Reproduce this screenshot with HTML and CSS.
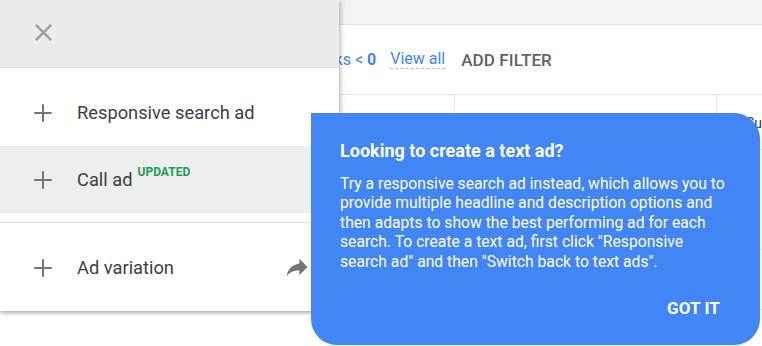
FILE: index.html
```html
<!DOCTYPE html>
<html>
<head>
<meta charset="utf-8">
<link rel="stylesheet" href="styles.css">
</head>
<body>
<div class="page">
  <div class="topbar"></div>
  <div class="filters">
    <span class="filter-chip">Clicks &lt; <b>0</b></span>
    <span class="view-all">View all</span>
    <span class="add-filter">ADD FILTER</span>
  </div>
  <div class="table-head">
    <div class="col col-1"></div>
    <div class="col col-2"></div>
    <div class="col col-3">Su</div>
  </div>
  <div class="table-row"></div>
  <div class="table-row tall"></div>
</div>

<div class="menu">
  <div class="menu-header">
    <svg class="close-icon" viewBox="0 0 24 24" width="29" height="29"><path d="M19 6.41L17.59 5 12 10.59 6.41 5 5 6.41 10.59 12 5 17.59 6.41 19 12 13.41 17.59 19 19 17.59 13.41 12z" fill="#9e9e9e"/></svg>
  </div>
  <div class="menu-list">
    <div class="menu-item">
      <svg class="plus" viewBox="0 0 24 24" width="30" height="30"><path d="M19 12.8h-6.2V19h-1.6v-6.2H5v-1.6h6.2V5h1.6v6.2H19z" fill="#757575"/></svg>
      <span class="label">Responsive search ad</span>
    </div>
    <div class="menu-item hover">
      <svg class="plus" viewBox="0 0 24 24" width="30" height="30"><path d="M19 12.8h-6.2V19h-1.6v-6.2H5v-1.6h6.2V5h1.6v6.2H19z" fill="#757575"/></svg>
      <span class="label">Call ad</span><sup class="badge">UPDATED</sup>
    </div>
    <div class="divider"></div>
    <div class="menu-item">
      <svg class="plus" viewBox="0 0 24 24" width="30" height="30"><path d="M19 12.8h-6.2V19h-1.6v-6.2H5v-1.6h6.2V5h1.6v6.2H19z" fill="#757575"/></svg>
      <span class="label">Ad variation</span>
      <svg class="forward" viewBox="0 0 24 24" width="28" height="28"><path d="M14 9V5l7 7-7 7v-4.1c-5 0-8.5 1.6-11 5.1 1-5 4-10 11-11z" fill="#757575"/></svg>
    </div>
  </div>
</div>

<div class="tip">
  <div class="tip-title">Looking to create a text ad?</div>
  <div class="tip-body">Try a responsive search ad instead, which allows you to provide multiple headline and description options and then adapts to show the best performing ad for each search. To create a text ad, first click "Responsive search ad" and then "Switch back to text ads".</div>
  <div class="tip-actions"><span class="got-it">GOT IT</span></div>
</div>
</body>
</html>
```

FILE: styles.css
```css
* { box-sizing: border-box; }
html, body { margin: 0; padding: 0; }
body {
  width: 762px;
  height: 346px;
  overflow: hidden;
  position: relative;
  background: #fff;
  font-family: Roboto, "Liberation Sans", sans-serif;
}
.page { width: 762px; }
.topbar {
  height: 25px;
  background: #f1f3f4;
  border-bottom: 1px solid #e0e0e0;
}
.filters {
  height: 69px;
  display: flex;
  align-items: center;
  padding-left: 308px;
  font-size: 16px;
  gap: 14px;
}
.filter-chip { color: #4285f4; }
.filter-chip b { font-weight: 700; }
.view-all {
  color: #4285f4;
  border-bottom: 1px dashed #bdbdbd;
  line-height: 18px;
}
.add-filter {
  color: #5f6368;
  font-weight: 500;
  font-size: 17px;
  letter-spacing: 0.1px;
  margin-left: 2px;
}
.table-head {
  display: flex;
  height: 56px;
  border-top: 1px solid #e3e3e3;
  border-bottom: 1px solid #e3e3e3;
}
.col { height: 100%; }
.col-1 { width: 454px; }
.col-2 { width: 262px; border-left: 1px solid #e3e3e3; }
.col-3 {
  flex: 1;
  border-left: 1px solid #e3e3e3;
  padding: 20px 0 0 29px;
  font-size: 14px;
  color: #3c4043;
}
.table-row { height: 100px; border-bottom: 1px solid #e3e3e3; }
.table-row.tall { height: 60px; }

.menu {
  position: absolute;
  left: 0;
  top: 0;
  width: 339px;
  background: #fff;
  box-shadow: 0 2px 4px rgba(0,0,0,0.25), 2px 0 6px rgba(0,0,0,0.15);
}
.menu-header {
  height: 68px;
  background: #ececec;
  border-bottom: 1px solid #dcdcdc;
  display: flex;
  align-items: center;
  padding-left: 29px;
  padding-bottom: 3px;
}
.menu-list { padding: 11px 0 10px; }
.menu-item {
  height: 67px;
  display: flex;
  align-items: center;
  padding-left: 28px;
  position: relative;
  color: #3c4043;
  font-size: 18.3px;
}
.menu-item.hover { background: #eeeeee; }
.plus { flex: none; margin-right: 19px; }
.badge {
  color: #1e9e4e;
  font-size: 12px;
  font-weight: 700;
  margin-left: 5px;
  position: relative;
  top: -8px;
  vertical-align: baseline;
}
.divider {
  height: 1px;
  background: #e0e0e0;
  margin: 9px 0 11px;
}
.forward {
  position: absolute;
  left: 283px;
  top: 19px;
}

.tip {
  position: absolute;
  left: 311px;
  top: 113px;
  width: 449px;
  height: 232px;
  background: #4285f4;
  border-radius: 0 26px 26px 26px;
  color: #fff;
  padding: 27px 30px 0 29px;
}
.tip-title {
  font-size: 18px;
  font-weight: 700;
  line-height: 22px;
}
.tip-body {
  margin-top: 12px;
  font-size: 15.7px;
  line-height: 19.4px;
  width: 390px;
}
.tip-actions {
  display: flex;
  justify-content: flex-end;
  margin-top: 27px;
  padding-right: 10px;
}
.got-it {
  font-size: 17px;
  font-weight: 700;
  letter-spacing: 0.1px;
}
```
